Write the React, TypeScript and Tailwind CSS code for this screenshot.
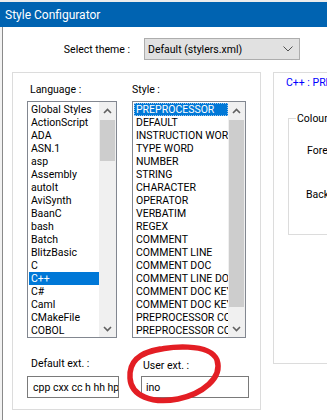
import React from 'react';

const languages = ['Global Styles','ActionScript','ADA','ASN.1','asp','Assembly','autoIt','AviSynth','BaanC','bash','Batch','BlitzBasic','C','C++','C#','Caml','CMakeFile','COBOL'];
const styles = ['PREPROCESSOR','DEFAULT','INSTRUCTION WORD','TYPE WORD','NUMBER','STRING','CHARACTER','OPERATOR','VERBATIM','REGEX','COMMENT','COMMENT LINE','COMMENT DOC','COMMENT LINE DOC','COMMENT DOC KEYWORD','COMMENT DOC KEYWORD ERROR','PREPROCESSOR COMMENT','PREPROCESSOR COMMENT DOC'];

function Arrow({ up }: { up?: boolean }) {
  return (
    <svg width="9" height="6" viewBox="0 0 9 6" className="block">
      <polyline
        points={up ? '1,5 4.5,1.5 8,5' : '1,1 4.5,4.5 8,1'}
        fill="none"
        stroke="#606060"
        strokeWidth="1.6"
      />
    </svg>
  );
}

function ListBox({
  items,
  selected,
  widthClass,
  thumbClass,
  focus,
}: {
  items: string[];
  selected: number;
  widthClass: string;
  thumbClass: string;
  focus?: boolean;
}) {
  return (
    <div className={`flex h-[237px] border border-[#828790] bg-white ${widthClass}`}>
      <div className="flex-1 min-w-0 pl-px pt-px overflow-hidden">
        {items.map((it, i) =>
          i === selected ? (
            <div
              key={i}
              className={`h-[13px] leading-[13px] pl-[2px] whitespace-nowrap overflow-hidden bg-[#0078d7] text-white ${focus ? 'outline outline-1 outline-dotted outline-[#9fc8ef] -outline-offset-1' : ''}`}
            >
              {it}
            </div>
          ) : (
            <div key={i} className="h-[13px] leading-[13px] pl-[2px] whitespace-nowrap overflow-hidden text-black">
              {it}
            </div>
          )
        )}
      </div>
      <div className="w-[17px] bg-[#f0f0f0] flex flex-col shrink-0">
        <div className="h-[17px] flex items-center justify-center">
          <Arrow up />
        </div>
        <div className="flex-1">
          <div className={`mt-px mx-px bg-[#cdcdcd] ${thumbClass}`} />
        </div>
        <div className="h-[17px] flex items-center justify-center">
          <Arrow />
        </div>
      </div>
    </div>
  );
}

export default function App() {
  return (
    <div className="relative w-[327px] h-[420px] overflow-hidden bg-white font-['Roboto','Liberation_Sans',sans-serif] text-[10.5px] text-black">
      <div className="h-[2px] bg-[#ececec]" />
      <div className="h-[25px] bg-[#0063b1] flex items-center pl-[5px] text-white text-[12px] font-['Roboto','Noto_Sans',sans-serif]">
        Style Configurator
      </div>
      <div className="flex h-[393px]">
        <div className="w-[2px] bg-[#f2f2f2]" />
        <div className="w-px bg-[#8a8a8a]" />
        <div className="flex-1 min-w-0 flex flex-col">
          <div className="mt-[11px] flex items-center">
            <div className="w-[127px] text-right leading-[13px]">Select theme :</div>
            <div className="ml-[14px] w-[156px] h-[22px] bg-[#e1e1e1] border border-[#adadad] flex items-center pl-[3px] pr-[6px]">
              <span className="flex-1 leading-[13px] whitespace-nowrap">Default (stylers.xml)</span>
              <svg width="10" height="6" viewBox="0 0 10 6">
                <polyline points="0.5,0.5 5,5 9.5,0.5" fill="none" stroke="#505050" strokeWidth="1" />
              </svg>
            </div>
          </div>

          <div className="mt-[12px] flex items-start">
            <div className="ml-[9px] w-[249px] h-[338px] shrink-0 border border-[#dcdcdc] flex flex-col pl-[14px]">
              <div className="flex mt-[10px]">
                <div className="flex flex-col w-[90px]">
                  <div className="h-[13px] leading-[13px] ml-[3px]">Language :</div>
                  <div className="mt-[5px]">
                    <ListBox items={languages} selected={13} widthClass="w-[90px]" thumbClass="h-[41px]" />
                  </div>
                </div>
                <div className="flex flex-col ml-[15px] w-[114px]">
                  <div className="h-[13px] leading-[13px]">Style :</div>
                  <div className="mt-[5px]">
                    <ListBox items={styles} selected={0} widthClass="w-[114px]" thumbClass="h-[187px]" focus />
                  </div>
                </div>
              </div>
              <div className="flex mt-[19px]">
                <div className="flex flex-col w-[92px]">
                  <div className="h-[13px] leading-[13px] ml-[4px]">Default ext. :</div>
                  <div className="mt-[6px] h-[22px] w-[92px] border border-[#7a7a7a] bg-white pl-[5px] flex items-center overflow-hidden whitespace-nowrap leading-[13px]">
                    cpp cxx cc h hh hpp hxx ino
                  </div>
                </div>
                <div className="flex flex-col ml-[22px] w-[108px]">
                  <div className="mt-[2px] h-[13px] leading-[13px] ml-[2px]">User ext. :</div>
                  <div className="mt-[4px] h-[22px] w-[108px] border border-[#7a7a7a] bg-white pl-[4px] flex items-center leading-[13px]">
                    ino
                  </div>
                </div>
              </div>
            </div>

            <div className="ml-[12px] w-[100px] h-[292px] shrink-0 border border-[#dcdcdc] flex flex-col">
              <div className="mt-[3px] pl-[12px] h-[13px] leading-[13px] text-[#0000ff] whitespace-nowrap">
                C++ : PREPROCESSOR
              </div>
              <fieldset className="ml-[14px] mt-[23px] h-[123px] w-[80px] border border-[#dcdcdc]">
                <legend className="ml-[7px] px-px leading-[13px]">Colour Style</legend>
                <div className="mt-[19px] ml-[18px] leading-[13px] whitespace-nowrap">Foreground colour</div>
                <div className="mt-[31px] ml-[17px] leading-[13px] whitespace-nowrap">Background colour</div>
              </fieldset>
            </div>
          </div>
        </div>
      </div>

      <svg className="absolute left-0 top-0 pointer-events-none" width="327" height="420" viewBox="0 0 327 420">
        <path
          d="M 146 353 C 170 345, 210 343, 217 360 C 223 378, 202 394, 178 399 C 152 404, 131 396, 130 378 C 129 362, 138 353, 160 349"
          fill="none"
          stroke="#e31e24"
          strokeWidth="5.5"
          strokeLinecap="round"
        />
      </svg>
    </div>
  );
}
